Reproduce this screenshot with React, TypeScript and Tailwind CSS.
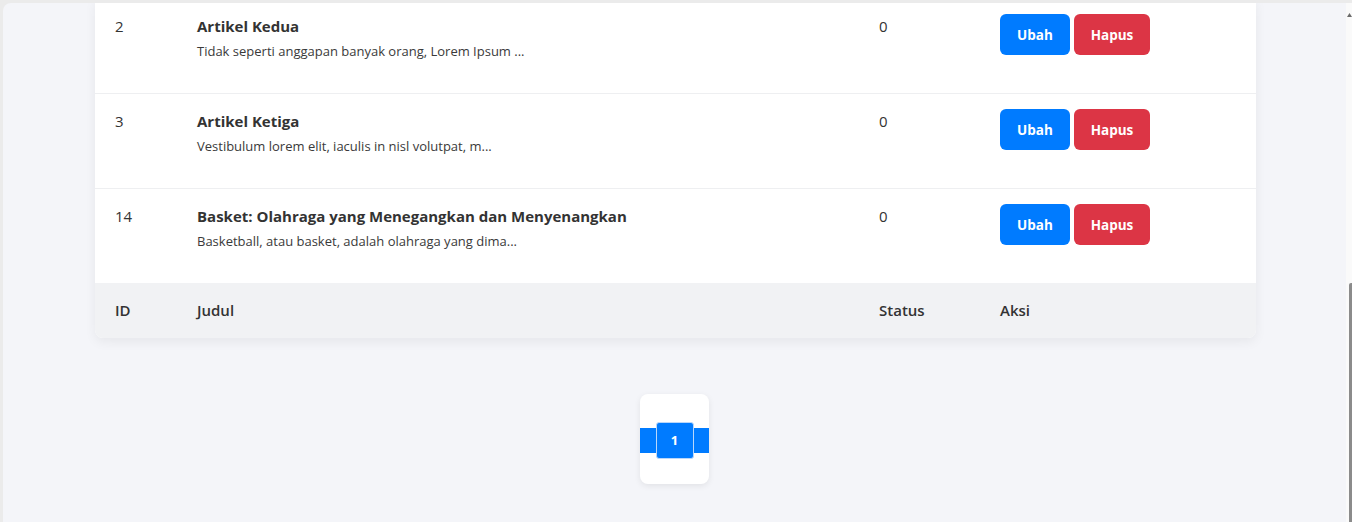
type Article = {
  id: number;
  title: string;
  excerpt: string;
  status: number;
};

const articles: Article[] = [
  { id: 2, title: 'Artikel Kedua', excerpt: 'Tidak seperti anggapan banyak orang, Lorem Ipsum ...', status: 0 },
  { id: 3, title: 'Artikel Ketiga', excerpt: 'Vestibulum lorem elit, iaculis in nisl volutpat, m...', status: 0 },
  {
    id: 14,
    title: 'Basket: Olahraga yang Menegangkan dan Menyenangkan',
    excerpt: 'Basketball, atau basket, adalah olahraga yang dima...',
    status: 0,
  },
];

const cols = 'grid grid-cols-[82px_682px_121px_1fr] px-5';

function ArticleRow({ article, last }: { article: Article; last: boolean }) {
  return (
    <div
      className={`${cols} ${last ? 'h-[94px]' : 'h-[95px] border-b border-[#eeeff1]'} items-start pt-[15px] text-[#333]`}
    >
      <div className="text-[15px] leading-[22px] pt-[1px]">{article.id}</div>
      <div className="pt-[1px]">
        <div className="text-[15px] leading-[22px] font-bold">{article.title}</div>
        <div className="text-[13px] leading-[20px] mt-[4px] text-[#3a3a3a]">{article.excerpt}</div>
      </div>
      <div className="text-[15px] leading-[22px] pt-[1px]">{article.status}</div>
      <div className="flex gap-1">
        <button className="h-[41px] w-[70px] pt-[2px] rounded-md bg-[#007bff] text-white text-[13.5px] font-bold">Ubah</button>
        <button className="h-[41px] w-[76px] pt-[2px] rounded-md bg-[#dc3545] text-white text-[13.5px] font-bold">Hapus</button>
      </div>
    </div>
  );
}

export default function App() {
  return (
    <div
      className="w-[1352px] h-[522px] bg-[#ebebeb] pt-[3px] pl-[3px] flex overflow-hidden"
      style={{ fontFamily: '"Open Sans", "Noto Sans", sans-serif' }}
    >
      <div className="flex-1 flex bg-[#f4f5f9] rounded-tl-[8px] overflow-hidden">
        {/* page content */}
        <div className="flex-1 flex flex-col">
          <div className="-mt-[4px] ml-[92px] w-[1161px] bg-white rounded-b-lg shadow-[0_4px_12px_rgba(0,0,0,0.06)] overflow-hidden">
            {articles.map((a, i) => (
              <ArticleRow key={a.id} article={a} last={i === articles.length - 1} />
            ))}
            <div className={`${cols} h-[55px] items-center bg-[#f1f2f4] text-[15px] font-semibold text-[#333]`}>
              <div>ID</div>
              <div>Judul</div>
              <div>Status</div>
              <div>Aksi</div>
            </div>
          </div>

          {/* pagination */}
          <div className="mt-[56px] flex justify-center">
            <div className="w-[69px] h-[90px] bg-white rounded-lg shadow-[0_2px_6px_rgba(0,0,0,0.08)] flex flex-col justify-center">
              <div className="h-[25px] bg-[#007bff] flex items-center justify-center mt-[3px]">
                <button className="h-[37px] w-[38px] shrink-0 rounded-[3px] border border-[#b9d7fb] bg-[#007bff] text-white text-[13px] font-bold">
                  1
                </button>
              </div>
            </div>
          </div>
        </div>

        {/* scrollbar */}
        <div className="w-[6px] bg-[#fafafa] flex flex-col">
          <svg width="6" height="8" viewBox="0 0 6 8" className="mt-[8px]">
            <path d="M1 6 L3.5 2 L6 6 Z" fill="#6b6b6b" />
          </svg>
          <div className="mt-auto ml-[3px] h-[239px] bg-[#8b8b8b] rounded-tl-[2px]" />
        </div>
      </div>
    </div>
  );
}
